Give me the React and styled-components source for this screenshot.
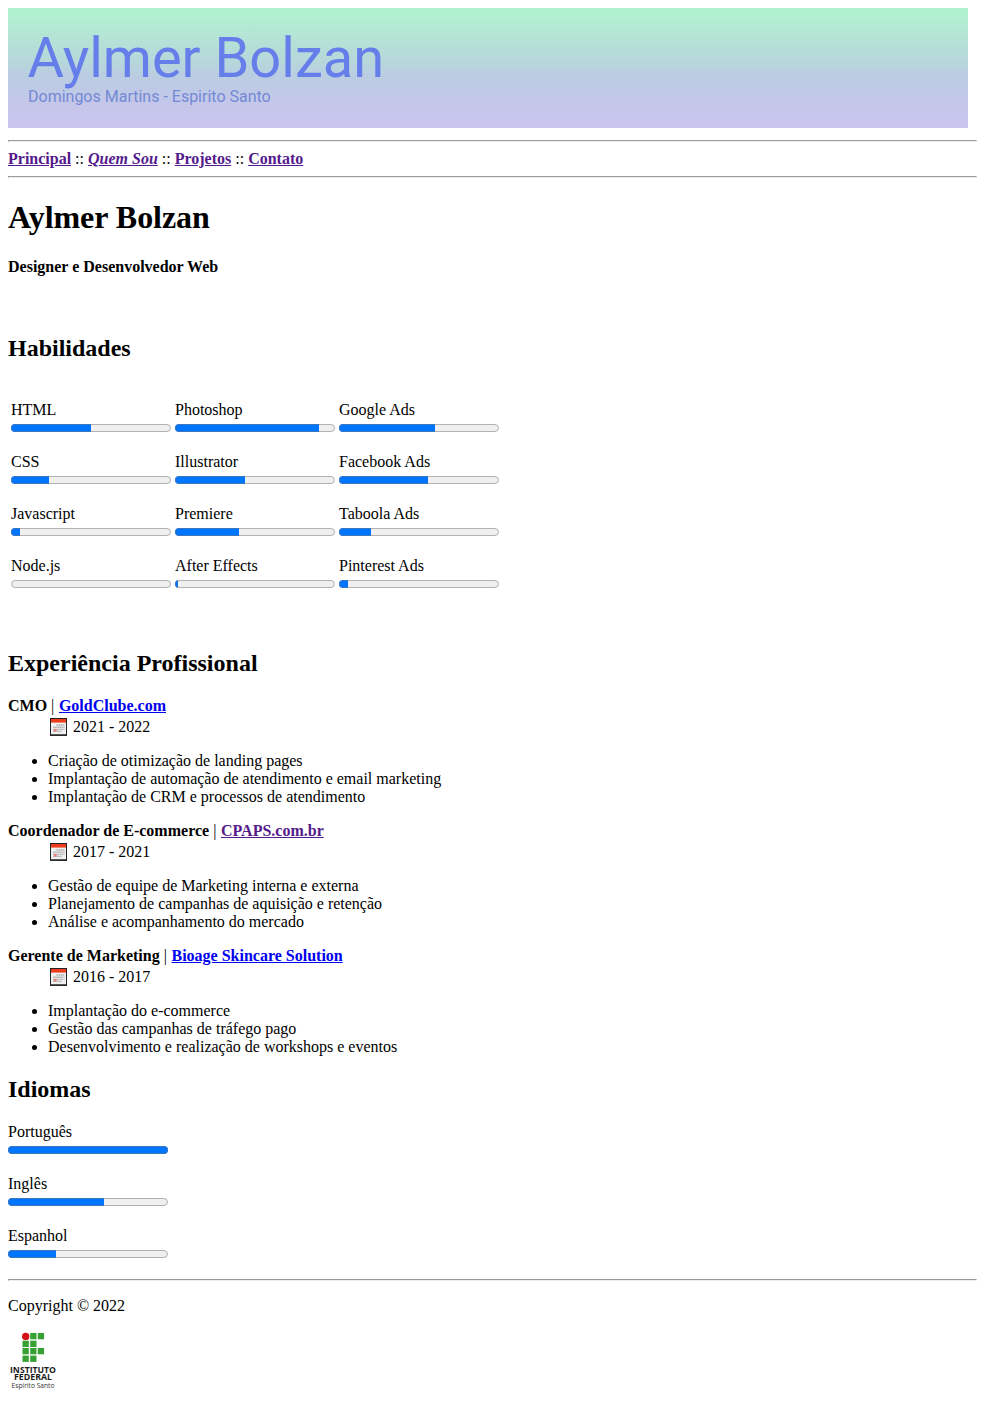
import React from 'react';
import styled, { createGlobalStyle } from 'styled-components';

const GlobalStyle = createGlobalStyle`
  body {
    margin: 8px;
    background: #fff;
    color: #000;
    font: 16px/18px "Liberation Serif", "Times New Roman", serif;
  }
`;

const Banner = styled.header`
  box-sizing: border-box;
  width: 960px;
  height: 120px;
  padding: 19px 20px 0;
  margin-bottom: 12px;
  background: linear-gradient(#b1f4cf 0%, #b7d5dc 47%, #bacde2 56%, #c5c6ea 82%, #cbc6f0 100%);
  font-family: Roboto, sans-serif;
`;
const BannerTitle = styled.div`
  font-size: 56px;
  line-height: 62px;
  text-indent: -0.5px;
  color: #667eea;
`;
const BannerPlace = styled.div`
  font-size: 16px;
  line-height: 15px;
  color: #7489d6;
`;
const Rule = styled.hr`
  margin: 0;
`;
const Nav = styled.nav`
  padding: 8px 0;
`;
const Link = styled.a`
  color: ${(p) => (p.$fresh ? '#0000ee' : '#551a8b')};
  font-weight: bold;
  font-style: ${(p) => (p.$current ? 'italic' : 'normal')};
  text-decoration: underline;
`;
const CompanyLink = styled(Link)`
  margin-left: 0.6px;
`;
const Name = styled.h1`
  margin: 21px 0 22px;
  font-size: 32px;
  line-height: 37px;
  letter-spacing: -0.04px;
`;
const Role = styled.p`
  margin: 0 0 59px;
  font-weight: bold;
`;
const Heading = styled.h2`
  margin: 0 0 20px;
  font-size: 24px;
  line-height: 27px;
`;
const SkillGrid = styled.div`
  display: grid;
  grid-template-columns: repeat(3, 160px);
  column-gap: 4px;
  padding: 19px 3px 41px;
`;
const Meter = styled.div`
  height: 52px;
`;
const Bar = styled.progress`
  display: block;
  width: 160px;
  height: 16px;
  margin-top: 1px;
`;
const Job = styled.section`
  margin-bottom: ${(p) => (p.$last ? '20px' : '16px')};
`;
const Period = styled.div`
  display: flex;
  align-items: center;
  gap: 5px;
  height: 20px;
  margin: 2px 0 15px 40px;
  padding-left: 2px;
  svg { display: block; }
`;
const Duties = styled.ul`
  margin: 0;
  padding-left: 40px;
`;
const Languages = styled.div`
  height: 156px;
`;
const Copyright = styled.p`
  margin: 16px 0;
`;
const Logo = styled.svg`
  display: block;
`;

const skills = [
  ['HTML', 50], ['Photoshop', 90], ['Google Ads', 60],
  ['CSS', 24], ['Illustrator', 44], ['Facebook Ads', 56],
  ['Javascript', 6], ['Premiere', 40], ['Taboola Ads', 20],
  ['Node.js', 0], ['After Effects', 2], ['Pinterest Ads', 6],
];
const languages = [['Português', 100], ['Inglês', 60], ['Espanhol', 30]];
const jobs = [
  {
    title: 'CMO', company: 'GoldClube.com', fresh: true, period: '2021 - 2022',
    duties: ['Criação de otimização de landing pages', 'Implantação de automação de atendimento e email marketing', 'Implantação de CRM e processos de atendimento'],
  },
  {
    title: 'Coordenador de E-commerce', company: 'CPAPS.com.br', fresh: false, period: '2017 - 2021',
    duties: ['Gestão de equipe de Marketing interna e externa', 'Planejamento de campanhas de aquisição e retenção', 'Análise e acompanhamento do mercado'],
  },
  {
    title: 'Gerente de Marketing', company: 'Bioage Skincare Solution', fresh: true, period: '2016 - 2017',
    duties: ['Implantação do e-commerce', 'Gestão das campanhas de tráfego pago', 'Desenvolvimento e realização de workshops e eventos'],
  },
];

const CalendarIcon = () => (
  <svg width="18" height="18" viewBox="0 0 18 18">
    <rect x="0.5" y="0.5" width="16" height="16.5" fill="#f0f0f0" stroke="#222" />
    <path d="M1 1h15v3.6H1z" fill="#ee3d1e" />
    <path d="M6.5 7h8M3 9.2h11.5M3 11.4h11.5M3 13.4h9" stroke="#b0b0b0" strokeWidth="1.4" strokeDasharray="1.6 .5" />
    <path d="M4 11h2.6v2.4H4z" fill="#ef8070" />
    <path d="M0 17.2h17" stroke="#111" strokeWidth="1.2" />
  </svg>
);

const InstituteLogo = () => (
  <Logo width="50" height="62" viewBox="0 0 50 62" fontFamily="Open Sans, sans-serif" textAnchor="middle">
    <circle cx="17.7" cy="5.4" r="3.7" fill="#d21218" />
    <g fill="#36a033">
      {[[22.2, 2], [29.8, 2], [14.5, 9.7], [22.2, 9.7], [14.5, 17], [22.2, 17], [29.8, 17], [14.5, 24.6], [22.2, 24.6]].map(([x, y]) => (
        <rect key={`${x}-${y}`} x={x} y={y} width="6.3" height="6.3" />
      ))}
    </g>
    <text x="25" y="41.6" fontSize="8.2" fontWeight="700" textLength="46" lengthAdjust="spacingAndGlyphs" fill="#1c1c1c">INSTITUTO</text>
    <text x="25" y="49" fontSize="8.2" fontWeight="700" textLength="38" lengthAdjust="spacingAndGlyphs" fill="#1c1c1c">FEDERAL</text>
    <text x="25" y="57" fontSize="6.6" textLength="43" lengthAdjust="spacingAndGlyphs" fill="#333">Espírito Santo</text>
  </Logo>
);

const Level = ({ label, value }) => (
  <Meter>
    {label}
    <Bar max="100" value={value} />
  </Meter>
);

export default function App() {
  return (
    <>
      <GlobalStyle />
      <Banner>
        <BannerTitle>Aylmer Bolzan</BannerTitle>
        <BannerPlace>Domingos Martins - Espirito Santo</BannerPlace>
      </Banner>
      <Rule />
      <Nav>
        <Link href="#">Principal</Link> :: <Link href="#" $current>Quem Sou</Link> :: <Link href="#">Projetos</Link> :: <Link href="#">Contato</Link>
      </Nav>
      <Rule />
      <Name>Aylmer Bolzan</Name>
      <Role>Designer e Desenvolvedor Web</Role>
      <Heading>Habilidades</Heading>
      <SkillGrid>
        {skills.map(([label, value]) => <Level key={label} label={label} value={value} />)}
      </SkillGrid>
      <Heading>Experiência Profissional</Heading>
      {jobs.map((job, i) => (
        <Job key={job.title} $last={i === jobs.length - 1}>
          <b>{job.title}</b> | <CompanyLink href="#" $fresh={job.fresh}>{job.company}</CompanyLink>
          <Period><CalendarIcon />{job.period}</Period>
          <Duties>{job.duties.map((d) => <li key={d}>{d}</li>)}</Duties>
        </Job>
      ))}
      <Heading>Idiomas</Heading>
      <Languages>
        {languages.map(([label, value]) => <Level key={label} label={label} value={value} />)}
      </Languages>
      <Rule />
      <Copyright>Copyright © 2022</Copyright>
      <InstituteLogo />
    </>
  );
}
